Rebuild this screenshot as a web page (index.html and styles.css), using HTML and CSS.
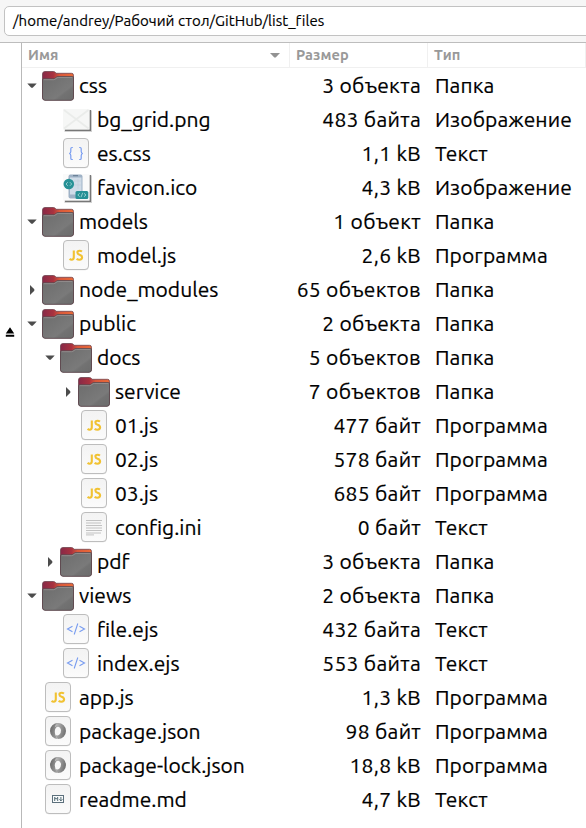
FILE: index.html
```html
<!DOCTYPE html>
<html lang="ru">
<head>
<meta charset="utf-8">
<title>list_files</title>
<link rel="stylesheet" href="styles.css">
</head>
<body>
<svg class="defs" aria-hidden="true">
  <defs>
    <linearGradient id="gTab" x1="0" x2="1"><stop offset="0" stop-color="#872948"/><stop offset=".35" stop-color="#a8323f"/><stop offset=".55" stop-color="#d9573a"/><stop offset="1" stop-color="#ea6b38"/></linearGradient>
    <linearGradient id="gBody" x1="0" x2="1" y1="0" y2="1"><stop offset="0" stop-color="#6c6c6c"/><stop offset=".66" stop-color="#7a7a7a"/><stop offset=".72" stop-color="#727272"/><stop offset="1" stop-color="#6c6c6c"/></linearGradient>
    <linearGradient id="gPage" x2="0" y2="1"><stop offset="0" stop-color="#f3f3f3"/><stop offset="1" stop-color="#fbfbfb"/></linearGradient>
    <linearGradient id="gRing" x1="0" x2="1" y2=".3"><stop offset="0" stop-color="#636363"/><stop offset="1" stop-color="#b0b0b0"/></linearGradient>
    <linearGradient id="gRing2" x1="0" x2="1" y2=".3"><stop offset="0" stop-color="#c4c4c4"/><stop offset="1" stop-color="#757575"/></linearGradient>
  </defs>
  <symbol id="folder" viewBox="0 0 32 34">
    <path d="M.5 28V5Q.5 2.500 3 2.500H11.500Q13 2.500 14 4.300H29.500Q31.500 4.300 31.500 6.300V28Q31.500 31 29 31H3Q.5 31 .5 28Z" fill="url(#gTab)" stroke="#70424e" stroke-width=".8"/>
    <path d="M.5 11Q.5 9.800 2 9.800H11Q12.500 9.800 13.500 8.800T16 7.500H30Q31.500 7.500 31.500 9V28.500Q31.500 31.300 29 31.300H3Q.5 31.300 .5 28.500Z" fill="url(#gBody)" stroke="#59454b" stroke-width=".8"/>
    <path d="M1.500 10.700H11.500Q13 10.500 14 9.500T16.500 8.400H30.500" fill="none" stroke="#9a9494" stroke-width=".8"/>
  </symbol>
  <symbol id="page" viewBox="0 0 32 34">
    <rect x="3.500" y="2" width="25" height="29.300" rx="3.500" fill="#ddd"/>
    <rect x="3.500" y="1.500" width="25" height="29" rx="3.500" fill="url(#gPage)" stroke="#bdbdbd"/>
  </symbol>
  <symbol id="js" viewBox="0 0 32 34"><use href="#page"/>
    <path d="M13.800 11.400V18.300Q13.800 20.700 11.700 20.700Q10.500 20.700 9.600 19.900M22 12.500Q20.800 11.700 19.500 11.700Q17.400 11.700 17.400 13.500Q17.400 15 19.600 15.700Q22.100 16.500 22.100 18.300Q22.100 20.700 19.400 20.700Q17.800 20.700 16.600 19.800" fill="none" stroke="#f1c232" stroke-width="2.100"/>
  </symbol>
  <symbol id="css" viewBox="0 0 32 34"><use href="#page"/>
    <path d="M12.800 10.500H12Q10.800 10.500 10.800 11.800V14.600Q10.800 16.300 9.200 16.500Q10.800 16.700 10.800 18.400V21.200Q10.800 22.500 12 22.500H12.800M19.200 10.500H20Q21.200 10.500 21.200 11.800V14.600Q21.200 16.300 22.800 16.500Q21.200 16.700 21.200 18.400V21.200Q21.200 22.500 20 22.500H19.200" fill="none" stroke="#789cf0" stroke-width="1.200"/>
  </symbol>
  <symbol id="code" viewBox="0 0 32 34"><use href="#page"/>
    <path d="M12.500 13.300L7.500 16L12.500 18.700M19.500 13.300L24.500 16L19.500 18.700M17.800 10.500L14.200 21.500" fill="none" stroke="#789cf0" stroke-width="1.100"/>
  </symbol>
  <symbol id="text" viewBox="0 0 32 34"><use href="#page"/>
    <path d="M8 9.500H24M8 12H23M8 14.500H24M8 17H24M8 19.500H24M8 22H23M8 23.900H16" stroke="#c2c2c2" stroke-width="1"/>
  </symbol>
  <symbol id="json" viewBox="0 0 32 34"><use href="#page"/>
    <path d="M16 8A8 8 0 0 0 16 24Q12.600 20.500 12.800 16Q13.200 12 16 11.500Q19 11 19.500 13.500Q19.500 9 16 8Z" fill="url(#gRing)"/>
    <path d="M16 8A8 8 0 0 1 16 24Q14.200 22.500 13.400 20Q15.500 21 17.200 19.800Q19.200 18 19 15Q18.600 12 16 11.500Q14 11 12.800 12.500Q13 9 16 8Z" fill="url(#gRing2)"/>
  </symbol>
  <symbol id="md" viewBox="0 0 32 34"><use href="#page"/>
    <rect x="10.500" y="12.500" width="11" height="7" fill="#f8fafb" stroke="#5c707c"/>
    <path d="M12.700 18V14.300L14.200 16.200L15.700 14.300V18M18.900 14V17.500M17.400 16.300L18.900 17.900L20.400 16.300" fill="none" stroke="#435c68" stroke-width=".9"/>
  </symbol>
  <symbol id="grid" viewBox="0 0 32 34">
    <path d="M30.500 7.500V27.500H4.500" fill="none" stroke="#d2d2d2" stroke-width="3"/>
    <path d="M30.300 7V27.300H5" fill="none" stroke="#777" stroke-width="1.500"/>
    <rect x="3" y="6" width="26.500" height="20.500" fill="#f6f7f6"/>
    <path d="M4 7L28.500 25.500M28.500 7L4 25.500" stroke="#eaecea" stroke-width="1.800"/>
  </symbol>
  <symbol id="favicon" viewBox="0 0 32 34">
    <path d="M30.500 4.500V30.500H4.500" fill="none" stroke="#d2d2d2" stroke-width="3"/>
    <path d="M30.300 4V30.300H5" fill="none" stroke="#777" stroke-width="1.500"/>
    <rect x="3" y="3" width="26.500" height="26.500" fill="#fafafa"/>
    <rect x="8.500" y="3.500" width="14" height="24" rx="2" fill="#9fb2c6"/>
    <rect x="10" y="6.500" width="11.500" height="17" fill="#d0dce8"/>
    <path d="M13 4.700H18" stroke="#60778e"/>
    <path d="M14 10H21M14 14H21M18 8V18" stroke="#c2ced9" stroke-width=".6"/>
    <circle cx="8.800" cy="13" r="5.300" fill="#279196"/>
    <path d="M7.800 11.200L6 13L7.800 14.800M9.900 11.200L11.700 13L9.900 14.800" fill="none" stroke="#9fd2d3" stroke-width=".9"/>
    <rect x="15.500" y="20" width="12.800" height="8" rx="1.500" fill="#279196"/>
    <path d="M19.700 22.300L17.800 24L19.700 25.700M24 22.300L26 24L24 25.700M22.700 21.800L21 26.200" fill="none" stroke="#9fd2d3" stroke-width=".9"/>
  </symbol>
  <symbol id="open" viewBox="0 0 10 10"><path d="M.3 2.500H9.700L5.700 6.700H4.300Z" fill="#4c4c4c"/></symbol>
  <symbol id="closed" viewBox="0 0 10 10"><path d="M3 0V10L7.300 5.800V4.200Z" fill="#4c4c4c"/></symbol>
</svg>

<header class="toolbar"><div class="path"><span>/home/andrey/Рабочий стол/GitHub/list_files</span></div></header>
<div class="main">
  <aside class="side"><svg class="eject" viewBox="0 0 9 10"><path d="M4.500 .3L8.700 6.500H.3ZM.3 7.700H8.700V9.700H.3Z"/></svg></aside>
  <main class="list">
    <div class="row head">
      <div class="h name-h"><span>Имя</span><svg class="sort" viewBox="0 0 10 5"><path d="M0 0H10L5.700 4.600H4.300Z" fill="#929292"/></svg></div>
      <div class="h">Размер</div><div class="h">Тип</div>
    </div>
    <div class="row"><div class="name"><svg class="exp"><use href="#open"/></svg><svg class="icon"><use href="#folder"/></svg><span>css</span></div><div class="size">3 объекта</div><div class="type">Папка</div></div>
    <div class="row"><div class="name l1"><i class="exp"></i><svg class="icon"><use href="#grid"/></svg><span>bg_grid.png</span></div><div class="size">483 байта</div><div class="type">Изображение</div></div>
    <div class="row"><div class="name l1"><i class="exp"></i><svg class="icon"><use href="#css"/></svg><span>es.css</span></div><div class="size">1,1 kB</div><div class="type">Текст</div></div>
    <div class="row"><div class="name l1"><i class="exp"></i><svg class="icon"><use href="#favicon"/></svg><span>favicon.ico</span></div><div class="size">4,3 kB</div><div class="type">Изображение</div></div>
    <div class="row"><div class="name"><svg class="exp"><use href="#open"/></svg><svg class="icon"><use href="#folder"/></svg><span>models</span></div><div class="size">1 объект</div><div class="type">Папка</div></div>
    <div class="row"><div class="name l1"><i class="exp"></i><svg class="icon"><use href="#js"/></svg><span>model.js</span></div><div class="size">2,6 kB</div><div class="type">Программа</div></div>
    <div class="row"><div class="name"><svg class="exp"><use href="#closed"/></svg><svg class="icon"><use href="#folder"/></svg><span>node_modules</span></div><div class="size">65 объектов</div><div class="type">Папка</div></div>
    <div class="row"><div class="name"><svg class="exp"><use href="#open"/></svg><svg class="icon"><use href="#folder"/></svg><span>public</span></div><div class="size">2 объекта</div><div class="type">Папка</div></div>
    <div class="row"><div class="name l1"><svg class="exp"><use href="#open"/></svg><svg class="icon"><use href="#folder"/></svg><span>docs</span></div><div class="size">5 объектов</div><div class="type">Папка</div></div>
    <div class="row"><div class="name l2"><svg class="exp"><use href="#closed"/></svg><svg class="icon"><use href="#folder"/></svg><span>service</span></div><div class="size">7 объектов</div><div class="type">Папка</div></div>
    <div class="row"><div class="name l2"><i class="exp"></i><svg class="icon"><use href="#js"/></svg><span>01.js</span></div><div class="size">477 байт</div><div class="type">Программа</div></div>
    <div class="row"><div class="name l2"><i class="exp"></i><svg class="icon"><use href="#js"/></svg><span>02.js</span></div><div class="size">578 байт</div><div class="type">Программа</div></div>
    <div class="row"><div class="name l2"><i class="exp"></i><svg class="icon"><use href="#js"/></svg><span>03.js</span></div><div class="size">685 байт</div><div class="type">Программа</div></div>
    <div class="row"><div class="name l2"><i class="exp"></i><svg class="icon"><use href="#text"/></svg><span>config.ini</span></div><div class="size">0 байт</div><div class="type">Текст</div></div>
    <div class="row"><div class="name l1"><svg class="exp"><use href="#closed"/></svg><svg class="icon"><use href="#folder"/></svg><span>pdf</span></div><div class="size">3 объекта</div><div class="type">Папка</div></div>
    <div class="row"><div class="name"><svg class="exp"><use href="#open"/></svg><svg class="icon"><use href="#folder"/></svg><span>views</span></div><div class="size">2 объекта</div><div class="type">Папка</div></div>
    <div class="row"><div class="name l1"><i class="exp"></i><svg class="icon"><use href="#code"/></svg><span>file.ejs</span></div><div class="size">432 байта</div><div class="type">Текст</div></div>
    <div class="row"><div class="name l1"><i class="exp"></i><svg class="icon"><use href="#code"/></svg><span>index.ejs</span></div><div class="size">553 байта</div><div class="type">Текст</div></div>
    <div class="row"><div class="name"><i class="exp"></i><svg class="icon"><use href="#js"/></svg><span>app.js</span></div><div class="size">1,3 kB</div><div class="type">Программа</div></div>
    <div class="row"><div class="name"><i class="exp"></i><svg class="icon"><use href="#json"/></svg><span>package.json</span></div><div class="size">98 байт</div><div class="type">Программа</div></div>
    <div class="row"><div class="name"><i class="exp"></i><svg class="icon"><use href="#json"/></svg><span>package-lock.json</span></div><div class="size">18,8 kB</div><div class="type">Программа</div></div>
    <div class="row"><div class="name"><i class="exp"></i><svg class="icon"><use href="#md"/></svg><span>readme.md</span></div><div class="size">4,7 kB</div><div class="type">Текст</div></div>
  </main>
</div>
</body>
</html>
```
FILE: styles.css
```css
* { box-sizing: border-box; }
body { margin: 0; height: 828px; overflow: hidden; background: #fff; color: #000; font-family: Ubuntu, "Noto Sans", sans-serif; display: flex; flex-direction: column; }
.defs { position: absolute; width: 0; height: 0; }
.toolbar { flex: none; height: 43px; padding: 6px 0 0 4px; background: #f6f6f6; border-bottom: 1px solid #bdbdbd; overflow: hidden; }
.path { height: 30px; width: 600px; padding-left: 8px; border: 1px solid #c2c2c2; border-radius: 5px; background: #fff; font-size: 15px; letter-spacing: .04px; line-height: 28px; white-space: nowrap; -webkit-text-stroke: .15px #000; }
.main { flex: 1; display: flex; min-height: 0; }
.side { width: 22px; flex: none; border-right: 1px solid #b9b9b9; padding: 284px 0 0 5px; }
.eject { display: block; width: 10px; height: 10px; }
.list { flex: 1; min-width: 0; }
.row { display: grid; grid-template-columns: 268px 138px 1fr; height: 34px; font-size: 21px; line-height: 32px; white-space: nowrap; -webkit-text-stroke: .2px #000; }
.head { height: 25px; margin-bottom: 1px; font-size: 14.6px; line-height: 23px; font-weight: 700; color: #999; border-bottom: 1px solid #f0f0f0; -webkit-text-stroke: 0; }
.h { padding-left: 6px; border-right: 1px solid #f0f0f0; letter-spacing: .1px; }
.name-h { display: flex; align-items: center; justify-content: space-between; padding-right: 9px; }
.name-h > span { padding-bottom: 1px; }
.sort { width: 10px; height: 5px; }
.name { display: flex; align-items: center; padding-left: 5px; }
.name > span { padding-bottom: 2px; }
.l1 { padding-left: 23px; }
.l2 { padding-left: 41px; }
.exp { width: 10px; height: 10px; flex: none; margin-right: 5px; }
.icon { width: 32px; height: 34px; flex: none; margin-right: 5px; }
.size { text-align: right; padding-right: 7px; letter-spacing: .3px; }
.type { padding-left: 7px; letter-spacing: .1px; }
```
